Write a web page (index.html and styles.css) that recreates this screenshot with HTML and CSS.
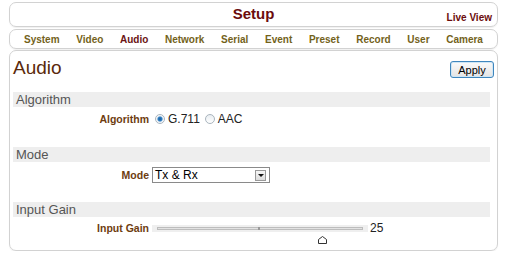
FILE: index.html
```html
<!DOCTYPE html>
<html lang="en">
<head>
  <meta charset="UTF-8">
  <title>Setup - Audio</title>
  <link rel="stylesheet" href="styles.css">
</head>
<body>
  <header class="top">
    <h1 class="page-title">Setup</h1>
    <a class="live-view" href="#">Live View</a>
  </header>

  <nav class="menu">
    <a href="#">System</a>
    <a href="#">Video</a>
    <a href="#" class="active">Audio</a>
    <a href="#">Network</a>
    <a href="#">Serial</a>
    <a href="#">Event</a>
    <a href="#">Preset</a>
    <a href="#">Record</a>
    <a href="#">User</a>
    <a href="#">Camera</a>
  </nav>

  <main class="content">
    <div class="title-row">
      <h2>Audio</h2>
      <button class="apply">Apply</button>
    </div>

    <section class="group">
      <div class="bar">Algorithm</div>
      <div class="row">
        <span class="label">Algorithm</span>
        <div class="control">
          <span class="radio checked"></span><span class="opt">G.711</span>
          <span class="radio"></span><span class="opt">AAC</span>
        </div>
      </div>
    </section>

    <section class="group">
      <div class="bar">Mode</div>
      <div class="row">
        <span class="label">Mode</span>
        <div class="control">
          <div class="select">
            <span>Tx &amp; Rx</span>
            <span class="arrow"></span>
          </div>
        </div>
      </div>
    </section>

    <section class="group">
      <div class="bar">Input Gain</div>
      <div class="row gain-row">
        <span class="label">Input Gain</span>
        <div class="control">
          <div class="slider">
            <div class="track"><span class="tick"></span></div>
            <svg class="thumb" width="9" height="8" viewBox="0 0 9 8">
              <path d="M0.5 7.5 V3.5 L4.5 0.5 L8.5 3.5 V7.5 Z" fill="#fff" stroke="#333" stroke-width="1"/>
            </svg>
          </div>
          <span class="value">25</span>
        </div>
      </div>
    </section>
  </main>
</body>
</html>
```

FILE: styles.css
```css
body {
  margin: 0;
  padding: 2px 7px 0 9px;
  font-family: 'Liberation Sans', Arial, sans-serif;
  background: #fff;
}

.top,
.menu,
.content {
  border: 1px solid #d2d2d2;
  border-radius: 7px;
  box-shadow: 0 1px 1px rgba(0,0,0,0.06);
}

.top {
  height: 23px;
  display: grid;
  grid-template-columns: 1fr auto 1fr;
}

.page-title {
  grid-column: 2;
  margin: 0;
  font-size: 15px;
  line-height: 18px;
  padding-top: 2px;
  color: #6b0c0c;
}

.live-view {
  grid-column: 3;
  justify-self: end;
  align-self: end;
  padding: 0 5px 2px 0;
  font-size: 10px;
  line-height: 12px;
  font-weight: bold;
  color: #6b0c0c;
  text-decoration: none;
}

.menu {
  margin-top: 2px;
  height: 18px;
  padding: 0 14px;
  display: flex;
  justify-content: space-between;
  align-items: center;
}

.menu a {
  font-size: 10px;
  font-weight: bold;
  color: #73621a;
  text-decoration: none;
}

.menu a.active {
  color: #6b1414;
}

.content {
  margin-top: 1px;
  height: 199px;
  padding: 0 3px;
}

.title-row {
  height: 41px;
  display: flex;
  justify-content: space-between;
  align-items: flex-start;
}

.title-row h2 {
  margin: 0;
  padding-top: 6px;
  font-size: 19px;
  line-height: 22px;
  font-weight: normal;
  color: #5a2a0c;
}

.apply {
  margin-top: 10px;
  width: 44px;
  height: 17px;
  padding: 0;
  font-family: inherit;
  font-size: 11px;
  color: #000;
  border: 1px solid #3f86bd;
  border-radius: 3px;
  background: linear-gradient(#fafafa, #e4e4e4);
  box-shadow: inset 0 0 0 1px #cfe6f5;
}

.group {
  height: 55px;
}

.bar {
  height: 15px;
  line-height: 15px;
  margin-right: 4px;
  padding-left: 3px;
  background: #eeeeee;
  font-size: 13px;
  color: #555;
}

.row {
  display: flex;
  align-items: center;
  margin-top: 5px;
}

.label {
  width: 136px;
  text-align: right;
  font-size: 10.5px;
  font-weight: bold;
  color: #6e3c10;
}

.control {
  margin-left: 3px;
  display: flex;
  align-items: center;
}

.radio {
  width: 8px;
  height: 8px;
  border: 1px solid #a9b4bd;
  border-radius: 50%;
  margin: 0 3px 0 3px;
  background: linear-gradient(#e8edf1, #fff);
}

.radio.checked {
  background: radial-gradient(circle, #1b5d9b 0, #2f7fc4 2px, #dfe9f2 3px, #fff 4px);
}

.opt {
  font-size: 12px;
  color: #222;
  margin-right: 2px;
}

.select {
  width: 114px;
  height: 14px;
  border: 1px solid #8a8a8a;
  display: flex;
  justify-content: space-between;
  align-items: center;
  font-size: 12px;
  padding-left: 2px;
  box-sizing: content-box;
}

.select .arrow {
  width: 9px;
  height: 9px;
  margin-right: 3px;
  border: 1px solid #999;
  background: linear-gradient(#f6f6f6, #dcdcdc);
  position: relative;
}

.select .arrow::after {
  content: "";
  position: absolute;
  left: 2px;
  top: 3px;
  border-left: 3px solid transparent;
  border-right: 3px solid transparent;
  border-top: 3px solid #111;
}

.row.gain-row {
  align-items: flex-start;
  margin-top: 4px;
}

.gain-row .label {
  line-height: 14px;
}

.gain-row .control {
  align-items: flex-start;
}

.slider {
  width: 216px;
  padding-top: 4px;
}

.track {
  height: 7px;
  background: #efefef;
  position: relative;
}

.track::before {
  content: "";
  position: absolute;
  left: 5px;
  right: 5px;
  top: 2px;
  height: 1px;
  border: 1px solid #bdbdbd;
  background: #e2e2e2;
}

.tick {
  position: absolute;
  left: 106px;
  top: 2px;
  width: 2px;
  height: 3px;
  background: #999;
}

.thumb {
  display: block;
  margin: 4px 0 0 166px;
}

.value {
  margin-left: 2px;
  font-size: 12px;
  line-height: 14px;
  color: #222;
}
```
